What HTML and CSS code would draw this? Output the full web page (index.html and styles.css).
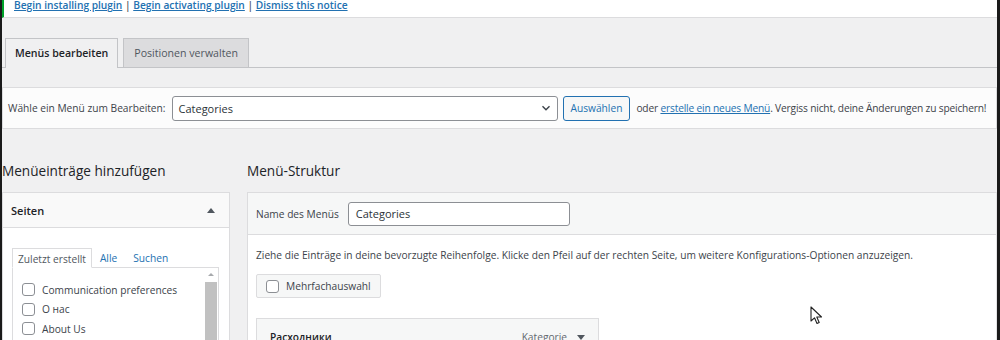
FILE: index.html
```html
<!DOCTYPE html>
<html lang="de">
<head>
  <meta charset="UTF-8">
  <title>Menüs</title>
  <link rel="stylesheet" href="styles.css">
</head>
<body>
  <div class="screen">
    <div class="notice">
      <p><a href="#">Begin installing plugin</a> | <a href="#">Begin activating plugin</a> | <a href="#">Dismiss this notice</a></p>
    </div>

    <div class="tabs">
      <div class="tab active">Menüs bearbeiten</div>
      <div class="tab">Positionen verwalten</div>
    </div>

    <div class="manage">
      <label class="manage-label">Wähle ein Menü zum Bearbeiten:</label>
      <div class="select">
        <span>Categories</span>
        <svg width="10" height="10" viewBox="0 0 10 10"><path d="M1.5 3.2 5 6.7 8.5 3.2" fill="none" stroke="#3c434a" stroke-width="1.4"/></svg>
      </div>
      <button class="btn">Auswählen</button>
      <span class="manage-text">oder <a href="#">erstelle ein neues Menü</a>. Vergiss nicht, deine Änderungen zu speichern!</span>
    </div>

    <div class="columns">
      <div class="col-left">
        <h2>Menüeinträge hinzufügen</h2>
        <div class="accordion">
          <div class="acc-head">
            <span>Seiten</span>
            <span class="arrow-up"></span>
          </div>
          <div class="acc-body">
            <div class="inner-tabs">
              <span class="inner-tab active">Zuletzt erstellt</span>
              <span class="inner-tab">Alle</span>
              <span class="inner-tab">Suchen</span>
            </div>
            <div class="panel">
              <ul class="pages">
                <li><span class="check"></span>Communication preferences</li>
                <li><span class="check"></span>О нас</li>
                <li><span class="check"></span>About Us</li>
              </ul>
              <div class="scrollbar">
                <span class="scroll-arrow"></span>
                <span class="thumb"></span>
              </div>
            </div>
          </div>
        </div>
      </div>

      <div class="col-right">
        <h2>Menü-Struktur</h2>
        <div class="menu-box">
          <div class="menu-head">
            <label>Name des Menüs</label>
            <div class="name-input">Categories</div>
          </div>
          <div class="menu-body">
            <p class="hint">Ziehe die Einträge in deine bevorzugte Reihenfolge. Klicke den Pfeil auf der rechten Seite, um weitere Konfigurations-Optionen anzuzeigen.</p>
            <div class="bulk"><span class="check"></span>Mehrfachauswahl</div>
            <div class="menu-item">
              <span class="item-title">Расходники</span>
              <span class="item-type">Kategorie <span class="arrow-down"></span></span>
            </div>
          </div>
        </div>
      </div>
    </div>

    <svg class="cursor" width="13" height="19" viewBox="0 0 13 19">
      <path d="M1 1 L1 15 L4.5 11.8 L7 17.5 L9.2 16.5 L6.8 11 L11.5 11 Z" fill="#fff" stroke="#222" stroke-width="1.1" stroke-linejoin="round"/>
    </svg>
  </div>
</body>
</html>
```

FILE: styles.css
```css
body {
  margin: 0;
  font-family: "Open Sans", "Noto Sans", sans-serif;
  font-size: 10.2px;
  color: #3c434a;
}

.screen {
  position: relative;
  height: 340px;
  overflow: hidden;
  background: #f0f0f1;
  border-left: 2px solid #1a1a1a;
  border-right: 3px solid #1a1a1a;
}

a {
  color: #2271b1;
}

.notice {
  height: 17px;
  background: #fff;
  border-left: 2px solid #00a32a;
  border-bottom: 1px solid #dcdcde;
  padding-left: 10px;
  overflow: hidden;
}

.notice p {
  margin: -5px 0 0;
  line-height: 20px;
  font-weight: 600;
  color: #50575e;
}

.tabs {
  display: flex;
  gap: 5px;
  margin-top: 20px;
  padding-left: 3px;
  border-bottom: 1px solid #c3c4c7;
}

.tab {
  height: 28px;
  line-height: 28px;
  padding: 0 10px;
  font-size: 10.6px;
  color: #50575e;
  background: #dcdcde;
  border: 1px solid #c3c4c7;
  border-bottom: none;
}

.tab.active {
  padding: 0 9px;
  background: #f0f0f1;
  color: #1d2327;
  font-weight: 600;
  height: 29px;
  margin-bottom: -1px;
}

.manage {
  display: flex;
  align-items: center;
  margin-top: 19px;
  height: 40px;
  padding: 0 5px;
  background: #fcfcfc;
  border: 1px solid #dcdcde;
  white-space: nowrap;
}

.manage > * {
  flex: none;
}

.manage-label {
  margin-right: 6px;
}

.select {
  display: flex;
  align-items: center;
  justify-content: space-between;
  width: 372px;
  height: 23px;
  padding: 0 6px;
  background: #fff;
  border: 1px solid #8c8f94;
  border-radius: 3px;
  font-size: 11px;
  color: #2c3338;
}

.btn {
  margin-left: 5px;
  height: 25px;
  padding: 0 7px;
  font-family: inherit;
  font-size: 10.2px;
  color: #2271b1;
  background: #f6f7f7;
  border: 1px solid #2271b1;
  border-radius: 3px;
}

.manage-text {
  margin-left: 6px;
  letter-spacing: -0.17px;
}

.columns {
  display: flex;
  gap: 17px;
  margin-top: 31px;
}

h2 {
  margin: 0 0 11px;
  font-size: 13.6px;
  font-weight: 400;
  line-height: 21px;
  color: #1d2327;
}

.col-left {
  width: 228px;
  flex: none;
}

.col-right {
  flex: 1;
}

.accordion {
  height: 200px;
  background: #fff;
  border: 1px solid #dcdcde;
}

.acc-head {
  display: flex;
  align-items: center;
  justify-content: space-between;
  height: 34px;
  padding: 0 14px 0 8px;
  background: #f9f9f9;
  border-bottom: 1px solid #dcdcde;
  font-size: 11px;
  font-weight: 600;
  color: #1d2327;
}

.arrow-up {
  width: 0;
  height: 0;
  border-left: 4px solid transparent;
  border-right: 4px solid transparent;
  border-bottom: 5px solid #50575e;
}

.acc-body {
  padding: 20px 10px 0 9px;
}

.inner-tabs {
  display: flex;
  height: 20px;
}

.inner-tab {
  padding: 0 8px;
  line-height: 20px;
  color: #2271b1;
}

.inner-tab.active {
  color: #50575e;
  background: #fff;
  border: 1px solid #dcdcde;
  border-bottom: 1px solid #fff;
  padding: 0 5px;
  position: relative;
  z-index: 1;
}

.panel {
  display: flex;
  height: 120px;
  margin-top: -1px;
  border: 1px solid #dcdcde;
}

.pages {
  flex: 1;
  margin: 0;
  padding: 12px 0 0 9px;
  list-style: none;
}

.pages li {
  display: flex;
  align-items: center;
  height: 19.5px;
}

.check {
  width: 11px;
  height: 11px;
  margin-right: 7px;
  background: #fff;
  border: 1px solid #8c8f94;
  border-radius: 3px;
}

.scrollbar {
  display: flex;
  flex-direction: column;
  align-items: center;
  width: 12px;
  margin-right: 1px;
}

.scroll-arrow {
  margin-top: 5px;
  width: 0;
  height: 0;
  border-left: 3px solid transparent;
  border-right: 3px solid transparent;
  border-bottom: 3px solid #a7aaad;
}

.thumb {
  margin-top: 6px;
  width: 12px;
  flex: 1;
  background: #c1c1c1;
}

.menu-box {
  height: 200px;
  background: #fff;
  border: 1px solid #dcdcde;
  border-right-color: #e4e4e6;
}

.menu-head {
  display: flex;
  align-items: center;
  gap: 9px;
  height: 41px;
  padding: 0 8px;
  background: #f6f7f7;
  border-bottom: 1px solid #dcdcde;
}

.name-input {
  width: 206px;
  height: 22px;
  line-height: 22px;
  padding: 0 7px;
  background: #fff;
  border: 1px solid #8c8f94;
  border-radius: 3px;
  font-size: 11px;
  color: #2c3338;
}

.menu-body {
  padding: 0 8px;
}

.hint {
  margin: 13px 0 0;
  line-height: 15px;
}

.bulk {
  display: inline-flex;
  align-items: center;
  height: 22px;
  margin-top: 11px;
  padding: 0 9px;
  background: #f6f7f7;
  border: 1px solid #dcdcde;
  border-radius: 2px;
}

.menu-item {
  display: flex;
  align-items: center;
  justify-content: space-between;
  width: 315px;
  height: 36px;
  margin-top: 20px;
  padding: 0 13px;
  background: #f6f7f7;
  border: 1px solid #dcdcde;
}

.item-title {
  font-weight: 600;
  color: #1d2327;
}

.item-type {
  display: flex;
  align-items: center;
  gap: 10px;
  color: #646970;
}

.arrow-down {
  width: 0;
  height: 0;
  border-left: 4px solid transparent;
  border-right: 4px solid transparent;
  border-top: 5px solid #50575e;
}

.cursor {
  position: absolute;
  left: 808px;
  top: 306px;
}
```
